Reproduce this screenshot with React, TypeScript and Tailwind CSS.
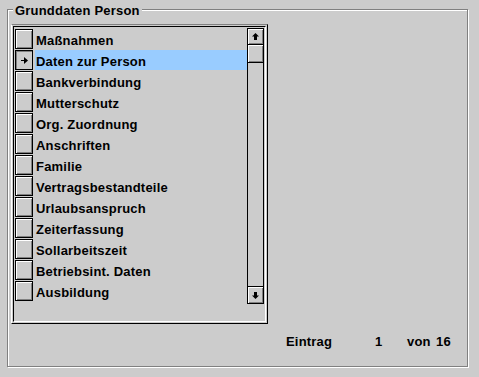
import React from "react";

const items = [
  "Maßnahmen",
  "Daten zur Person",
  "Bankverbindung",
  "Mutterschutz",
  "Org. Zuordnung",
  "Anschriften",
  "Familie",
  "Vertragsbestandteile",
  "Urlaubsanspruch",
  "Zeiterfassung",
  "Sollarbeitszeit",
  "Betriebsint. Daten",
  "Ausbildung",
];

const raised =
  "shadow-[inset_1px_1px_0_#fff,inset_-1px_-1px_0_#808080]";
const pressed = "shadow-[inset_1px_1px_0_#808080]";

function RowButton({ active }: { active: boolean }) {
  return (
    <div
      className={`flex h-[20px] w-[18px] shrink-0 items-center justify-center border border-black bg-[#cccccc] ${
        active ? pressed : raised
      }`}
    >
      {active && (
        <svg width="8" height="7" viewBox="0 0 8 7" className="ml-[1px] mt-[1px]">
          <rect x="0" y="3" width="4" height="1" fill="#000" />
          <polygon points="3,0 7,3.5 3,7" fill="#000" />
        </svg>
      )}
    </div>
  );
}

function Arrow({ up }: { up: boolean }) {
  return (
    <svg width="7" height="7" viewBox="0 0 7 7">
      {up ? (
        <>
          <polygon points="3.5,0 7,3.5 0,3.5" fill="#000" />
          <rect x="2" y="3" width="3" height="4" fill="#000" />
        </>
      ) : (
        <>
          <rect x="2" y="0" width="3" height="4" fill="#000" />
          <polygon points="0,3.5 7,3.5 3.5,7" fill="#000" />
        </>
      )}
    </svg>
  );
}

export default function App() {
  return (
    <div className="relative h-[377px] w-[479px] overflow-hidden bg-[#cccccc] pl-[7px] pt-[9px] text-[13px] font-bold tracking-[0.2px] text-black [font-family:'Liberation_Sans',Arial,sans-serif]">
      <div className="h-[358px] w-[461px] border border-[#808080] shadow-[inset_1px_1px_0_#fff,1px_1px_0_#fff]">
        <div className="ml-[3px] mt-[14px] h-[300px] w-[257px] border border-b-black border-l-white border-r-black border-t-[#808080] p-[1px]">
          <div className="h-full border border-b-white border-l-black border-r-white border-t-black">
            <div className="ml-[1px] mt-[1px] flex">
              <div className="w-[232px] pt-[1px]">
                {items.map((label, i) => (
                  <div key={label} className="flex h-[21px] items-start">
                    <RowButton active={i === 1} />
                    <div
                      className={`ml-[2px] flex h-[20px] flex-1 items-center pl-[1px] pt-[2px] leading-none ${
                        i === 1 ? "bg-[#99ccff]" : ""
                      }`}
                    >
                      {label}
                    </div>
                  </div>
                ))}
              </div>
              <div className="flex h-[276px] w-[17px] flex-col border border-black">
                <div className={`flex h-[16px] items-center justify-center border-b border-black ${raised}`}>
                  <Arrow up />
                </div>
                <div className={`h-[18px] border-b border-black ${raised}`} />
                <div className="flex-1" />
                <div className={`flex h-[17px] items-center justify-center border-t border-black ${raised}`}>
                  <Arrow up={false} />
                </div>
              </div>
            </div>
          </div>
        </div>
        <div className="ml-[278px] mt-[9px] flex h-[16px] items-center leading-none">
          <span className="w-[89px]">Eintrag</span>
          <span className="w-[32px]">1</span>
          <span className="w-[29px]">von</span>
          <span>16</span>
        </div>
      </div>
      <div className="absolute left-[13px] top-[3px] h-[15px] bg-[#cccccc] px-[2px] leading-[15px]">
        Grunddaten Person
      </div>
    </div>
  );
}
